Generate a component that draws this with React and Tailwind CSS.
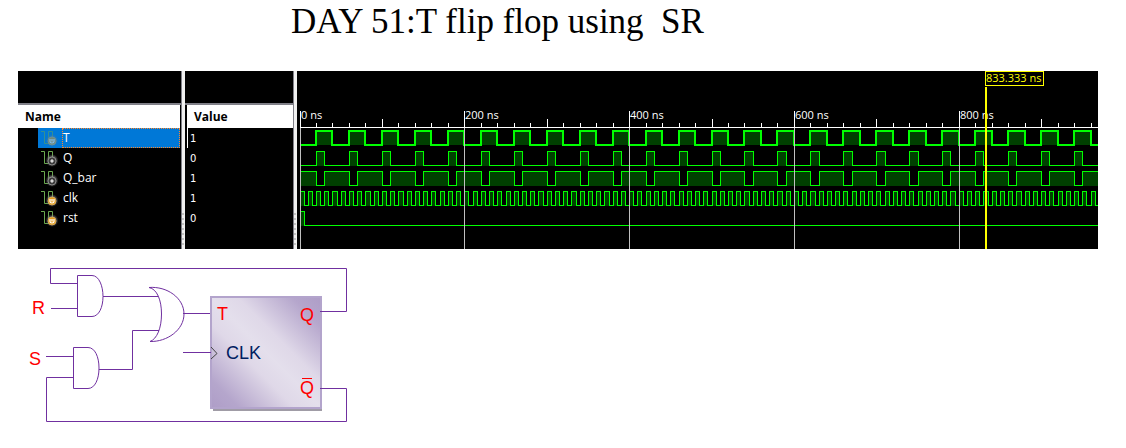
const SCALE = 0.824;
const END = 1000;
const X0 = 3;
const at = (t) => X0 + Math.floor(t * SCALE);

const every = (period, from, to) => {
  const pulses = [];
  for (let t = 0; t < END; t += period) pulses.push([t + from, t + to]);
  return pulses;
};

const SIGNALS = [
  { name: "T", value: "1", kind: "input", selected: true, pulses: every(40, 20, 40) },
  { name: "Q", value: "0", kind: "output", pulses: every(40, 20, 30) },
  { name: "Q_bar", value: "1", kind: "output", pulses: [[0, 20], ...every(40, 30, 60)] },
  { name: "clk", value: "1", kind: "input", pulses: every(10, 0, 5) },
  { name: "rst", value: "0", kind: "input", pulses: [[0, 5]] },
];

function SignalIcon({ kind, selected }) {
  const input = kind === "input";
  return (
    <svg width="18" height="18" viewBox="0 0 18 18" className={selected ? "shrink-0 opacity-50" : "shrink-0"} aria-hidden="true">
      <defs>
        <radialGradient id={`halo-${kind}`}>
          <stop offset="0.4" stopColor="#9a9a9a" />
          <stop offset="1" stopColor="#6c6c6c" stopOpacity="0" />
        </radialGradient>
      </defs>
      <path d="M1 2.5H4.5V14.5H8.5V2.5H12.500V8" fill="none" stroke="#6aa84f" />
      <circle cx="12" cy="11.5" r="6.500" fill={`url(#halo-${kind})`} />
      <circle cx="12" cy="12" r="4" fill={input ? "#e09a1c" : "#3c3c3c"} stroke={input ? "#dcb060" : "#9c9c9c"} strokeWidth="0.8" />
      {input ? (
        <path d="M10 10V12.500Q10 14 12 14T14 12.500V10M12 10V12.500" fill="none" stroke="#fff" strokeWidth="1.200" />
      ) : (
        <path d="M10.200 12H13.800M12 10.200V13.800" stroke="#fff" strokeWidth="1.200" />
      )}
    </svg>
  );
}

function Splitter() {
  return (
    <div className="flex w-1 shrink-0 flex-col justify-end border-l border-[#808088] bg-[#f0f0f0]">
      <div className="flex flex-col gap-[3px] pb-1">
        {[0, 1, 2, 3, 4, 5, 6].map((i) => (
          <span key={i} className="h-0.5 w-0.5 bg-[#c4c4c4]" />
        ))}
      </div>
    </div>
  );
}

function Wave({ signal, row }) {
  const top = 59.5 + row * 20 + (row > 0 ? 1 : 0);
  const hi = row === 0 ? 60 : top;
  const lo = row === 0 ? 74 : top + 14;
  const nudge = row === 0 ? 0 : 0.5;
  let d = `M${X0 + nudge} ${signal.pulses[0][0] === 0 ? hi : lo}`;
  signal.pulses.forEach(([a, b]) => {
    d += `H${at(a) + nudge}V${hi}H${at(b) + nudge}V${lo}`;
  });
  d += `H${at(END)}`;
  return (
    <g>
      {signal.pulses.map(([a, b]) => (
        <rect key={a} x={at(a)} y={hi} width={at(b) - at(a)} height={lo - hi} fill="#004000" />
      ))}
      <path d={d} fill="none" stroke="#00ff00" strokeWidth={row === 0 ? 2 : 1} />
    </g>
  );
}

function Waveform() {
  const ticks = [];
  for (let t = 0; t <= END; t += 20) ticks.push(t);
  const labels = [0, 200, 400, 600, 800];
  return (
    <svg width="827" height="178" className="block max-w-none" role="img" aria-label="Waveform">
      <g shapeRendering="crispEdges">
        {SIGNALS.map((s, i) => (
          <Wave key={s.name} signal={s} row={i} />
        ))}
        <path d="M3 56.5H827" stroke="#fff" />
        {ticks.map((t) => (
          <path key={t} d={`M${at(t) + 0.5} ${t % 200 === 0 ? 40 : t % 100 === 0 ? 48 : 52}V56`} stroke="#fff" />
        ))}
        {labels.map((t) => (
          <path key={t} d={`M${at(t) + 0.5} 57V178`} stroke="#c0c0c0" />
        ))}
      </g>
      {labels.map((t) => (
        <text key={t} x={at(t) + 1} y="48" fill="#fff" className="font-['Open_Sans',sans-serif] text-[11px]">
          {t} ns
        </text>
      ))}
      <path d="M689 16V178" stroke="#ffff00" strokeWidth="2" />
      <rect x="688.5" y="0.5" width="58" height="14" fill="#000" stroke="#ffff00" />
      <text x="689" y="11" fill="#ffff00" className="font-['Open_Sans',sans-serif] text-[11px]">
        833.333 ns
      </text>
    </svg>
  );
}

function Viewer() {
  return (
    <section className="flex h-[178px] overflow-hidden bg-black">
      <div className="w-[163px] shrink-0">
        <div className="h-[34px] border-b-2 border-[#808088]" />
        <table className="w-full border-collapse font-['Open_Sans',sans-serif] text-xs text-white">
          <thead>
            <tr className="h-[23px]">
              <th className="border-r border-black bg-white p-0 pl-[7px] text-left leading-4 font-bold text-black">Name</th>
            </tr>
          </thead>
          <tbody>
            {SIGNALS.map((s) => (
              <tr key={s.name} className="h-5">
                <td className="p-0 pr-px pl-5">
                  <div className={s.selected ? "flex h-5 items-center gap-1 bg-[#0078d7] pl-0.5" : "flex h-5 items-center gap-1 pl-0.5"}>
                    <SignalIcon kind={s.kind} selected={s.selected} />
                    <span className={s.selected ? "h-5 flex-1 border border-dotted border-[#ff8728] leading-[18px]" : "h-5 flex-1 border border-transparent leading-[18px]"}>
                      {s.name}
                    </span>
                  </div>
                </td>
              </tr>
            ))}
          </tbody>
        </table>
      </div>
      <Splitter />
      <div className="w-[108px] shrink-0">
        <div className="h-[34px] border-b-2 border-[#808088]" />
        <div className="pl-0.5">
          <table className="w-full border-collapse text-white">
            <thead>
              <tr className="h-[23px]">
                <th className="bg-white p-0 pl-[7px] text-left font-['Open_Sans',sans-serif] text-xs leading-4 font-bold text-black">Value</th>
              </tr>
            </thead>
            <tbody>
              {SIGNALS.map((s) => (
                <tr key={s.name} className="h-5">
                  <td className="p-0">
                    <div className={s.selected ? "h-5 border-l border-white pl-0.5 font-['DejaVu_Sans',sans-serif] text-[10px] leading-[22px]" : "h-5 border-l border-transparent pl-0.5 font-['DejaVu_Sans',sans-serif] text-[10px] leading-[22px]"}>
                      {s.value}
                    </div>
                  </td>
                </tr>
              ))}
            </tbody>
          </table>
        </div>
      </div>
      <Splitter />
      <div className="min-w-0 flex-1 overflow-hidden">
        <Waveform />
      </div>
    </section>
  );
}

function Circuit() {
  return (
    <svg width="340" height="170" viewBox="20 260 340 170" className="block" role="img" aria-label="T flip flop circuit">
      <defs>
        <linearGradient id="body" x1="1" y1="0" x2="0" y2="1">
          <stop offset="0" stopColor="#ae9dc7" />
          <stop offset="0.13" stopColor="#b5a6cc" />
          <stop offset="0.38" stopColor="#dfd8e8" />
          <stop offset="0.5" stopColor="#e4dfec" />
          <stop offset="0.62" stopColor="#dfd8e8" />
          <stop offset="0.87" stopColor="#b5a6cc" />
          <stop offset="1" stopColor="#ae9dc7" />
        </linearGradient>
      </defs>
      <rect x="213" y="301" width="109" height="110" fill="#a09ca6" />
      <rect x="211" y="297" width="110" height="111" fill="url(#body)" stroke="#b3a4cc" strokeWidth="2" />
      <g fill="none" stroke="#7030a0" strokeWidth="1">
        <path d="M77.5 283.5H50.5V268.5H346.5V311.5H320" />
        <path d="M51 308.5H77" />
        <path d="M92 275.5H77.5V316.5H92C99 316.5 103 307 103 296.5S99 275.5 92 275.5" />
        <path d="M103 296.5H158" />
        <path d="M46 356.5H73" />
        <path d="M88 347.5H73.5V388.5H88C95 388.5 99 379 99 368S95 347.5 88 347.5" />
        <path d="M99 369.5H132.5V330.5H159" />
        <path d="M149 287.5C167 286 184 298 184 314S167 342 150 341.5C157 339 161.5 328 161.5 314S157 289 149 287.5Z" />
        <path d="M183 313.5H210M183 352.5H211" />
        <path d="M73 377.5H46.5V421.5H346.5V388.5H320" />
      </g>
      <path d="M211 347L217 353.500L211 359" fill="none" stroke="#444" />
      <g className="font-['Liberation_Sans',sans-serif] text-lg" fill="#ff0000">
        <text x="32" y="314">R</text>
        <text x="29" y="365">S</text>
        <text x="217" y="320">T</text>
        <text x="300" y="321">Q</text>
        <text x="300" y="394">Q</text>
        <text x="226" y="359" fill="#002060">CLK</text>
      </g>
      <path d="M302 378.500H312" stroke="#ff0000" />
    </svg>
  );
}

export default function App() {
  return (
    <main className="bg-white pr-7 pl-[18px]">
      <h1 className="h-[71px] pl-[273px] font-['Liberation_Serif',serif] text-[35px] leading-[44px] whitespace-pre text-black">
        DAY 51:T flip flop using  SR
      </h1>
      <Viewer />
      <div className="pt-[11px] pl-0.5">
        <Circuit />
      </div>
    </main>
  );
}
